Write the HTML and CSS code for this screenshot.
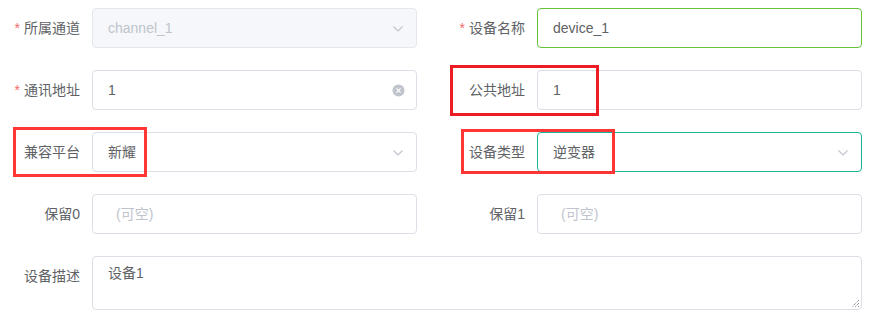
FILE: index.html
```html
<!DOCTYPE html>
<html lang="zh">
<head>
<meta charset="utf-8">
<link rel="stylesheet" href="styles.css">
</head>
<body>
<form class="form">
  <div class="item">
    <label class="label"><span class="req">*</span>所属通道</label>
    <div class="control input disabled">
      <span class="value">channel_1</span>
      <svg class="arrow" viewBox="0 0 12 8" width="12" height="8"><path d="M1.5 1.5 L6 6 L10.5 1.5" fill="none" stroke="#c0c4cc" stroke-width="1.1"/></svg>
    </div>
  </div>
  <div class="item">
    <label class="label"><span class="req">*</span>设备名称</label>
    <div class="control input success"><span class="value">device_1</span></div>
  </div>

  <div class="item">
    <label class="label"><span class="req">*</span>通讯地址</label>
    <div class="control input">
      <span class="value">1</span>
      <svg class="clear" viewBox="0 0 14 14" width="13" height="13"><circle cx="7" cy="7" r="6.5" fill="#c0c4cc"/><path d="M4.8 4.8 L9.2 9.2 M9.2 4.8 L4.8 9.2" stroke="#fff" stroke-width="1.2"/></svg>
    </div>
  </div>
  <div class="item">
    <label class="label">公共地址</label>
    <div class="control input"><span class="value">1</span></div>
    <div class="mark mark-a"></div>
  </div>

  <div class="item">
    <label class="label">兼容平台</label>
    <div class="control input">
      <span class="value">新耀</span>
      <svg class="arrow" viewBox="0 0 12 8" width="12" height="8"><path d="M1.5 1.5 L6 6 L10.5 1.5" fill="none" stroke="#c0c4cc" stroke-width="1.1"/></svg>
    </div>
    <div class="mark mark-b"></div>
  </div>
  <div class="item">
    <label class="label">设备类型</label>
    <div class="control input focus">
      <span class="value">逆变器</span>
      <svg class="arrow" viewBox="0 0 12 8" width="12" height="8"><path d="M1.5 1.5 L6 6 L10.5 1.5" fill="none" stroke="#c0c4cc" stroke-width="1.1"/></svg>
    </div>
    <div class="mark mark-c"></div>
  </div>

  <div class="item">
    <label class="label">保留0</label>
    <div class="control input"><span class="value placeholder">(可空)</span></div>
  </div>
  <div class="item">
    <label class="label">保留1</label>
    <div class="control input"><span class="value placeholder">(可空)</span></div>
  </div>

  <div class="item wide">
    <label class="label">设备描述</label>
    <div class="control textarea">
      <span class="value">设备1</span>
      <svg class="grip" viewBox="0 0 10 10" width="10" height="10"><path d="M9 2 L2 9 M9 5 L5 9 M9 8 L8 9" stroke="#555" stroke-width="0.9" stroke-dasharray="1 1"/></svg>
    </div>
  </div>
</form>
</body>
</html>
```
FILE: styles.css
```css
* { box-sizing: border-box; }
html, body {
  margin: 0;
  background: #fff;
}
body {
  font-family: "Liberation Sans", "Noto Sans CJK SC", sans-serif;
  font-size: 14px;
  color: #606266;
}
.form {
  display: grid;
  grid-template-columns: 417px 417px;
  column-gap: 28px;
  row-gap: 22px;
  padding-top: 8px;
}
.item {
  position: relative;
  display: flex;
  align-items: flex-start;
}
.item.wide {
  grid-column: 1 / 3;
}
.label {
  width: 92px;
  flex: none;
  padding-right: 12px;
  text-align: right;
  line-height: 40px;
  height: 40px;
  color: #606266;
}
.req {
  color: #f56c6c;
  margin-right: 4px;
}
.control {
  flex: 1;
  position: relative;
  border: 1px solid #dcdfe6;
  border-radius: 4px;
  background: #fff;
}
.input {
  height: 40px;
  display: flex;
  align-items: center;
  padding: 0 15px;
}
.input.disabled {
  background: #f5f7fa;
  border-color: #e4e7ed;
  color: #c0c4cc;
}
.input.success { border-color: #67c23a; }
.input.focus { border-color: #1cb39b; }
.value { flex: 1; line-height: 20px; }
.placeholder { color: #c0c4cc; padding-left: 8px; }
.arrow {
  position: absolute;
  right: 12px;
  top: 16px;
}
.clear {
  position: absolute;
  right: 11px;
  top: 13px;
}
.textarea {
  height: 54px;
  padding: 6px 15px;
  line-height: 21px;
}
.grip {
  position: absolute;
  right: 1px;
  bottom: 1px;
}
.mark {
  position: absolute;
  border: 3px solid #ff3636;
  pointer-events: none;
}
.mark-a {
  border-color: #ed1c24;
  left: 5px;
  top: -5px;
  width: 149px;
  height: 51px;
}
.mark-b {
  left: 13px;
  top: -5px;
  width: 134px;
  height: 50px;
}
.mark-c {
  left: 16px;
  top: -3px;
  width: 154px;
  height: 45px;
}
```
